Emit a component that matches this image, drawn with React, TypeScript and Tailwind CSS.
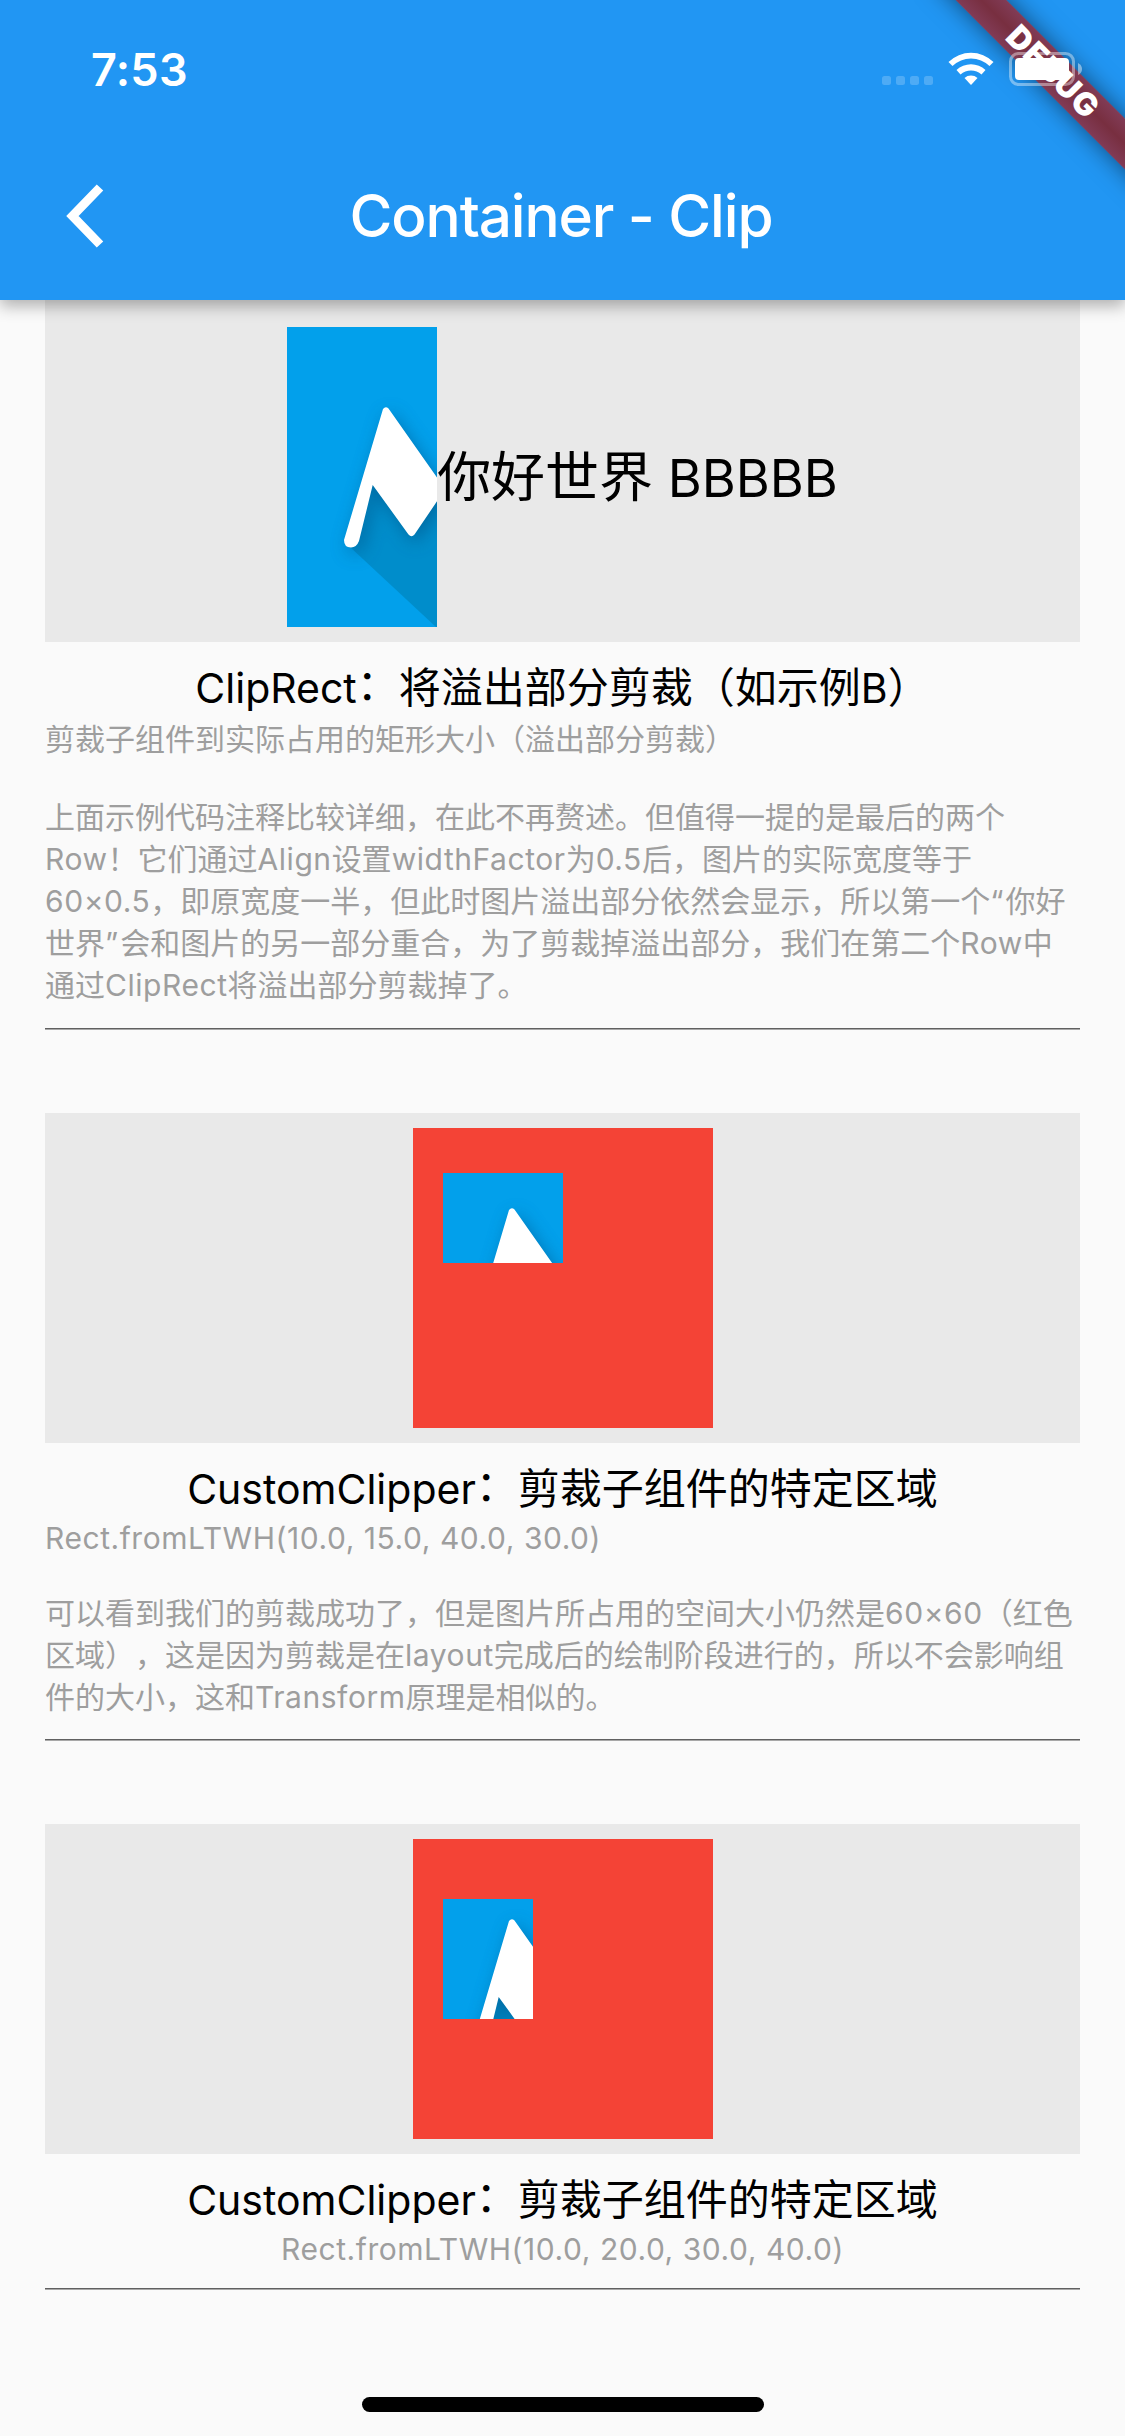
import React from 'react';

const RUNS = /([\u0020-\u007e\u00d7]+|[\u201c\u201d]|：)/;

/* Splits mixed text so that Latin runs, quotes and the colon get their own metrics. */
function Mixed({ text, latin }: { text: string; latin: string }) {
  return (
    <>
      {text.split(RUNS).map((part, i) => {
        if (i % 2 === 0) return <React.Fragment key={i}>{part}</React.Fragment>;
        if (part === '：')
          return (
            <span key={i} className="inline-block -translate-y-[3px]">
              {part}
            </span>
          );
        if (part === '“' || part === '”')
          return (
            <span key={i} className="tracking-[2px]">
              {part}
            </span>
          );
        return (
          <span key={i} className={latin}>
            {part}
          </span>
        );
      })}
    </>
  );
}

function Logo({ id, viewBox, className }: { id: string; viewBox: string; className: string }) {
  const mark =
    'M96 82 Q98.500 79 101.500 81.500 L150 150.500 L158 162.500 L127.500 207.500 Q124.500 211 121.500 207.500 L85.700 158 L72 214 Q69.500 220.500 64 220.500 Q57 220.500 57 213 Z';
  return (
    <svg viewBox={viewBox} className={`block shrink-0 overflow-hidden ${className}`}>
      <defs>
        <filter id={`${id}-soft`} x="-50%" y="-50%" width="200%" height="200%">
          <feGaussianBlur stdDeviation="9" />
        </filter>
      </defs>
      <rect width="300" height="300" fill="#02a0eb" />
      <path d="M85 150 L63 220 L149 300 L300 300 L300 158 L150 150 Z" fill="#008dcb" />
      <path d={mark} transform="translate(4 6)" fill="#00497a" opacity="0.5" filter={`url(#${id}-soft)`} />
      <path d={mark} fill="#fff" />
    </svg>
  );
}

function Title({ text }: { text: string }) {
  return (
    <h2 className="h-[60px] text-center whitespace-pre text-[42px] leading-[60px] text-black">
      <Mixed text={text} latin="text-[41px]" />
    </h2>
  );
}

function Lines({ lines }: { lines: string[] }) {
  return (
    <div className="text-[30px] leading-[42px] whitespace-pre text-[#9e9e9e]">
      {lines.map((l) => (
        <p key={l} className="h-[42px]">
          <Mixed text={l} latin="tracking-[0.55px]" />
        </p>
      ))}
    </div>
  );
}

function Divider() {
  return <div className="h-[2px] border-t border-[#606060] bg-[#a8a8a8]" />;
}

function StatusIcons() {
  return (
    <svg viewBox="0 0 205 40" className="h-[40px] w-[205px]" fill="#fff">
      <g opacity="0.2">
        <rect x="2" y="26" width="9" height="9" rx="2.500" />
        <rect x="16" y="26" width="9" height="9" rx="2.500" />
        <rect x="30" y="26" width="9" height="9" rx="2.500" />
        <rect x="44" y="26" width="9" height="9" rx="2.500" />
      </g>
      <path d="M68.500 12 A32 32 0 0 1 113.500 12 L109.500 16 A26.500 26.500 0 0 0 72.500 16 Z" />
      <path d="M76.500 20 A21 21 0 0 1 105.500 20 L101.500 24.500 A15.500 15.500 0 0 0 80.500 24.500 Z" />
      <path d="M84.500 28 A10 10 0 0 1 97.500 28 L91 35 Z" />
      <rect x="130.500" y="3.500" width="63" height="31" rx="8" fill="none" stroke="#fff" strokeWidth="3" opacity="0.4" />
      <rect x="135" y="8" width="54" height="22" rx="4" />
      <path d="M198 13 Q202 15 202 19 Q202 23 198 25 Z" opacity="0.45" />
    </svg>
  );
}

export default function App() {
  return (
    <div className="flex h-[2436px] w-[1125px] flex-col overflow-hidden bg-[#fafafa] font-['Inter','Noto_Sans_CJK_SC',sans-serif] [text-spacing-trim:space-all]">
      <header className="relative z-10 h-[300px] shrink-0 bg-[#2196f3] text-white shadow-[0_6px_15px_rgba(0,0,0,0.3)]">
        <div className="absolute inset-0 overflow-hidden">
          <div className="absolute top-[54px] left-[903px] flex h-[36px] w-[300px] rotate-45 items-center justify-center bg-linear-to-b from-[#813b56] via-[#782f40] to-[#813b56] text-[32px] font-black tracking-[1px] shadow-[0_0_24px_rgba(0,0,0,0.5)]">
            DEBUG
          </div>
        </div>
        <div className="relative flex h-[132px] items-start justify-between pr-[40px] pl-[91px]">
          <span className="mt-[43px] text-[45px] leading-[54px] font-semibold tracking-[0.3px]">7:53</span>
          <div className="mt-[50px]">
            <StatusIcons />
          </div>
        </div>
        <div className="relative flex h-[168px] items-center justify-center">
          <svg viewBox="0 0 40 66" className="absolute top-[51px] left-[66px] h-[66px] w-[40px]">
            <path d="M34 4.500 L6.500 33 L34 61.500" fill="none" stroke="#fff" strokeWidth="9" />
          </svg>
          <h1 className="pr-[3px] text-[58.5px] leading-[72px] font-medium tracking-[-1.1px]">Container - Clip</h1>
        </div>
      </header>

      <main className="flex flex-col px-[45px]">
        <section>
          <div className="flex h-[342px] items-center justify-center bg-[#e9e9e9] pt-[12px]">
            <Logo id="a" viewBox="0 0 150 300" className="h-[300px] w-[150px]" />
            <p className="pt-[2px] text-[54px] leading-[80px] whitespace-pre text-black">
              <Mixed text="你好世界 BBBBB" latin="text-[52px]" />
            </p>
          </div>
          <div className="pt-[16px]">
            <Title text="ClipRect：将溢出部分剪裁（如示例B）" />
          </div>
          <div className="flex h-[310px] flex-col gap-[36px]">
            <Lines lines={['剪裁子组件到实际占用的矩形大小（溢出部分剪裁）']} />
            <Lines
              lines={[
                '上面示例代码注释比较详细，在此不再赘述。但值得一提的是最后的两个',
                'Row！它们通过Align设置widthFactor为0.5后，图片的实际宽度等于',
                '60×0.5，即原宽度一半，但此时图片溢出部分依然会显示，所以第一个“你好',
                '世界”会和图片的另一部分重合，为了剪裁掉溢出部分，我们在第二个Row中',
                '通过ClipRect将溢出部分剪裁掉了。',
              ]}
            />
          </div>
          <Divider />
        </section>

        <section className="mt-[83px]">
          <div className="flex h-[330px] items-center justify-center bg-[#e9e9e9]">
            <div className="h-[300px] w-[300px] bg-[#f44336] pt-[45px] pl-[30px]">
              <Logo id="b" viewBox="30 45 120 90" className="h-[90px] w-[120px]" />
            </div>
          </div>
          <div className="pt-[16px]">
            <Title text="CustomClipper：剪裁子组件的特定区域" />
          </div>
          <div className="-mt-[2px] flex h-[222px] flex-col gap-[33px]">
            <Lines lines={['Rect.fromLTWH(10.0, 15.0, 40.0, 30.0)']} />
            <Lines
              lines={[
                '可以看到我们的剪裁成功了，但是图片所占用的空间大小仍然是60×60（红色',
                '区域），这是因为剪裁是在layout完成后的绘制阶段进行的，所以不会影响组',
                '件的大小，这和Transform原理是相似的。',
              ]}
            />
          </div>
          <Divider />
        </section>

        <section className="mt-[83px]">
          <div className="flex h-[330px] items-center justify-center bg-[#e9e9e9]">
            <div className="h-[300px] w-[300px] bg-[#f44336] pt-[60px] pl-[30px]">
              <Logo id="c" viewBox="30 60 90 120" className="h-[120px] w-[90px]" />
            </div>
          </div>
          <div className="pt-[16px]">
            <Title text="CustomClipper：剪裁子组件的特定区域" />
          </div>
          <div className="-mt-[2px] flex h-[60px] justify-center">
            <Lines lines={['Rect.fromLTWH(10.0, 20.0, 30.0, 40.0)']} />
          </div>
          <Divider />
        </section>
      </main>

      <div className="mt-[107px] ml-[362px] h-[15px] w-[402px] rounded-full bg-black" />
    </div>
  );
}
